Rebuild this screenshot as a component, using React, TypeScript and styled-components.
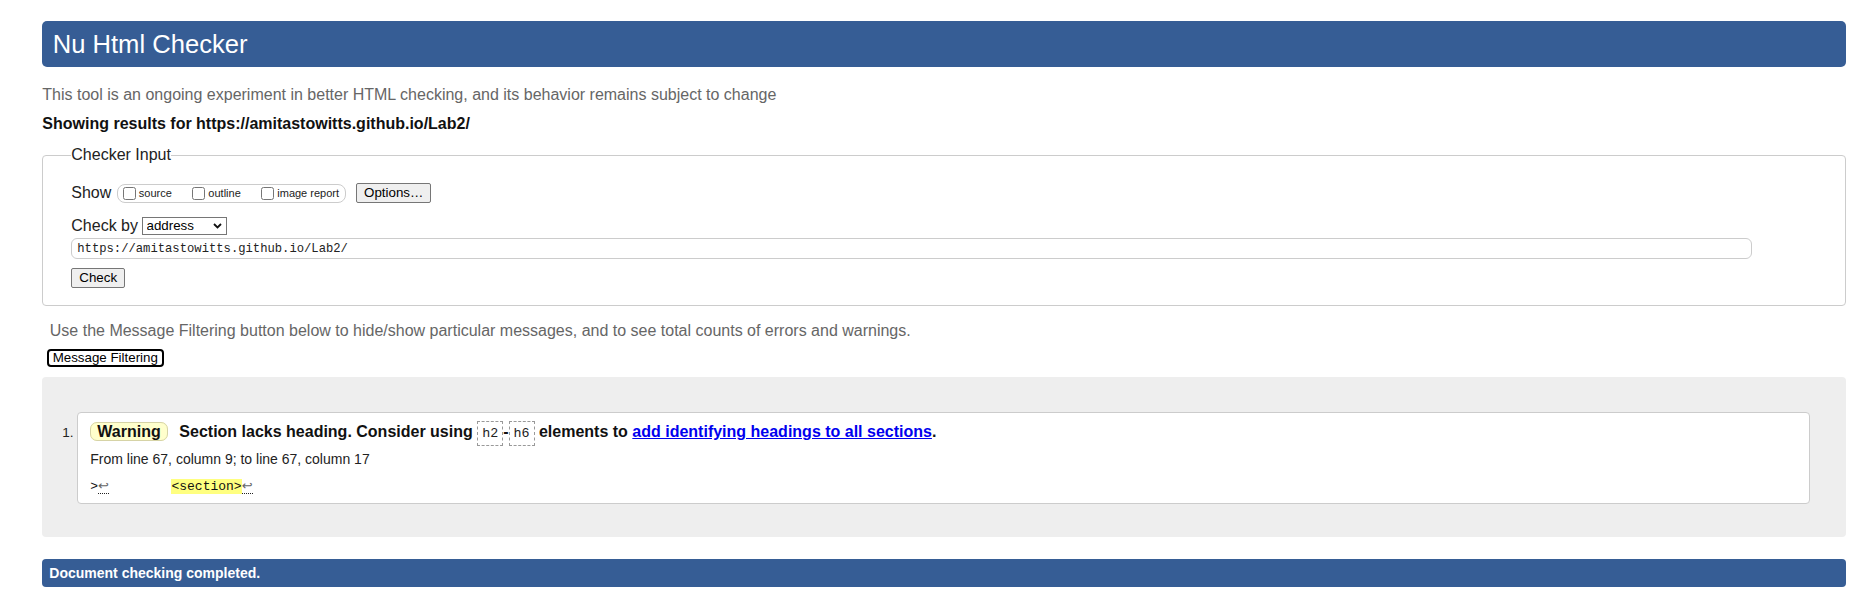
import styled, { createGlobalStyle } from 'styled-components';

const GlobalStyle = createGlobalStyle`
    html, body {
        margin: 0;
        padding: 0;
        background: #fff;
    }

    body {
        font-family: "Liberation Sans", Arial, sans-serif;
        font-size: 16px;
        color: #222;
    }

    * {
        box-sizing: border-box;
    }
`;

const mono = `"Liberation Mono", "DejaVu Sans Mono", monospace`;

const Page = styled.div`
    padding: 21px 15px 24px 42.3px;
`;

const Title = styled.h1`
    margin: 0;
    padding: 8.5px 10.4px;
    background: #365d95;
    color: #fff;
    font-size: 25.6px;
    font-weight: normal;
    line-height: 29.4px;
    border-radius: 5px;
`;

const Intro = styled.p`
    margin: 18.4px 0 0;
    line-height: 18.4px;
    color: #666;
`;

const Source = styled.p`
    margin: 11.1px 0 0;
    line-height: 18.4px;
    font-weight: bold;
    color: #111;
`;

const InputBox = styled.fieldset`
    margin: 12.2px 0 0;
    padding: 19px 28px 16.6px 28px;
    border: 1px solid #ccc;
    border-radius: 4px;
    min-width: 0;
`;

const BoxLegend = styled.legend`
    padding: 0;
    font-size: 16px;
    line-height: 18.4px;
    color: #222;
`;

const ShowRow = styled.div`
    display: flex;
    align-items: center;
    height: 20px;
`;

const OptionGroup = styled.div`
    display: inline-flex;
    align-items: center;
    height: 18.7px;
    margin-left: 5.5px;
    padding: 0 6px 0 1px;
    border: 1px solid #ccc;
    border-radius: 8px;
`;

const OptionLabel = styled.label`
    display: inline-flex;
    align-items: center;
    font-size: 11px;
    line-height: 13px;
    margin-right: 16.5px;

    &:last-child {
        margin-right: 0;
    }
`;

const Checkbox = styled.input`
    width: 13px;
    height: 13px;
    margin: 0 3px 0 4px;
`;

const FormButton = styled.button`
    font-family: "Liberation Sans", Arial, sans-serif;
    font-size: 13.33px;
    line-height: 18px;
    height: 20px;
    padding: 0 7px;
    background: #efefef;
    border: 1px solid #767676;
    border-radius: 2px;
    color: #000;
`;

const OptionsButton = styled(FormButton)`
    margin-left: 10px;
`;

const CheckButton = styled(FormButton)`
    display: block;
    margin-top: 9px;
`;

const CheckByRow = styled.div`
    display: flex;
    align-items: center;
    height: 18.4px;
    margin-top: 14px;
`;

const SelectWrap = styled.div`
    position: relative;
    display: inline-block;
    height: 18px;
    margin-left: 3.5px;
`;

const Select = styled.select`
    appearance: none;
    display: block;
    width: 85px;
    height: 18px;
    padding: 0 0 0 4px;
    border: 1px solid #767676;
    border-radius: 0;
    background: #fff;
    color: #000;
    font-family: "Liberation Sans", Arial, sans-serif;
    font-size: 13.33px;
    line-height: 16px;
`;

const Chevron = styled.svg`
    position: absolute;
    right: 5px;
    top: 6px;
    pointer-events: none;
`;

const UrlInput = styled.input`
    display: block;
    margin-top: 2.8px;
    width: 1681px;
    height: 21px;
    padding: 0 5px;
    border: 1px solid #ccc;
    border-radius: 6px;
    font-family: ${mono};
    font-size: 12.2px;
    color: #222;
`;

const Hint = styled.p`
    margin: 16px 0 0;
    padding-left: 7.5px;
    line-height: 18.4px;
    color: #666;
`;

const FilterButton = styled.button`
    display: block;
    margin: 9px 0 0 4.4px;
    height: 18px;
    padding: 0 4px;
    border: 2px solid #000;
    border-radius: 4px;
    background: #fff;
    color: #000;
    font-family: "Liberation Sans", Arial, sans-serif;
    font-size: 13.33px;
    line-height: 14px;
`;

const Results = styled.div`
    margin-top: 9.5px;
    padding: 35.4px 36px 33px 35px;
    background: #eee;
    border-radius: 4px;
`;

const MessageList = styled.ol`
    margin: 0;
    padding: 0;
    list-style: decimal outside;
`;

const Message = styled.li`
    background: #fff;
    border: 1px solid #ccc;
    border-radius: 4px;
    padding: 9.9px 12px 8.2px;

    &::marker {
        font-size: 13.5px;
        color: #222;
    }
`;

const Summary = styled.p`
    margin: 0;
    line-height: 18.4px;
    font-weight: bold;
    color: #111;
`;

const Badge = styled.span`
    padding: 0 6px;
    margin-right: 7.2px;
    background: #ffffcc;
    border: 1px solid #d6d3a6;
    border-radius: 7px;
`;

const Code = styled.code`
    font-family: ${mono};
    font-size: 13.33px;
    font-weight: normal;
    line-height: 1;
    padding: 4px;
    border: 1px dashed #999;
    background: #fff;
    color: #222;
`;

const DocLink = styled.a`
    color: #0000ee;
    text-decoration: underline;
`;

const Location = styled.p`
    margin: 9.4px 0 0;
    font-size: 14px;
    line-height: 16.1px;
    color: #222;
`;

const Extract = styled.code`
    display: block;
    margin-top: 11.6px;
    font-family: ${mono};
    font-size: 13px;
    line-height: 14.7px;
    white-space: pre;
    color: #111;
`;

const Mark = styled.b`
    font-weight: normal;
    background: #ffff80;
`;

const LineFeed = styled.span`
    font-family: "DejaVu Sans", sans-serif;
    line-height: 1;
    color: #666;
    border-bottom: 1px dotted #222;
`;

const DoneBar = styled.div`
    margin-top: 22px;
    padding: 6px 7px;
    background: #365d95;
    color: #fff;
    font-size: 14px;
    font-weight: bold;
    line-height: 16px;
    border-radius: 4px;
`;

export default function App() {
    const url = 'https://amitastowitts.github.io/Lab2/';

    return (
        <>
            <GlobalStyle />
            <Page>
                <Title>Nu Html Checker</Title>
                <Intro>This tool is an ongoing experiment in better HTML checking, and its behavior remains subject to change</Intro>
                <Source>Showing results for {url}</Source>

                <InputBox>
                    <BoxLegend>Checker Input</BoxLegend>
                    <ShowRow>
                        <span>Show</span>
                        <OptionGroup>
                            <OptionLabel><Checkbox type="checkbox" />source</OptionLabel>
                            <OptionLabel><Checkbox type="checkbox" />outline</OptionLabel>
                            <OptionLabel><Checkbox type="checkbox" />image report</OptionLabel>
                        </OptionGroup>
                        <OptionsButton type="button">Options…</OptionsButton>
                    </ShowRow>
                    <CheckByRow>
                        <span>Check by</span>
                        <SelectWrap>
                            <Select defaultValue="address">
                                <option value="address">address</option>
                                <option value="file">file upload</option>
                                <option value="text">text input</option>
                            </Select>
                            <Chevron width="9" height="6" viewBox="0 0 9 6">
                                <path d="M1 1 L4.5 4.5 L8 1" fill="none" stroke="#111" strokeWidth="1.8" />
                            </Chevron>
                        </SelectWrap>
                    </CheckByRow>
                    <UrlInput type="url" defaultValue={url} />
                    <CheckButton type="button">Check</CheckButton>
                </InputBox>

                <Hint>Use the Message Filtering button below to hide/show particular messages, and to see total counts of errors and warnings.</Hint>
                <FilterButton type="button">Message Filtering</FilterButton>

                <Results>
                    <MessageList>
                        <Message>
                            <Summary>
                                <Badge>Warning</Badge> Section lacks heading. Consider using <Code>h2</Code>-<Code>h6</Code> elements to <DocLink href="#">add identifying headings to all sections</DocLink>.
                            </Summary>
                            <Location>From line 67, column 9; to line 67, column 17</Location>
                            <Extract>&gt;<LineFeed>↩</LineFeed>{'        '}<Mark>&lt;section&gt;</Mark><LineFeed>↩</LineFeed></Extract>
                        </Message>
                    </MessageList>
                </Results>

                <DoneBar>Document checking completed.</DoneBar>
            </Page>
        </>
    );
}
